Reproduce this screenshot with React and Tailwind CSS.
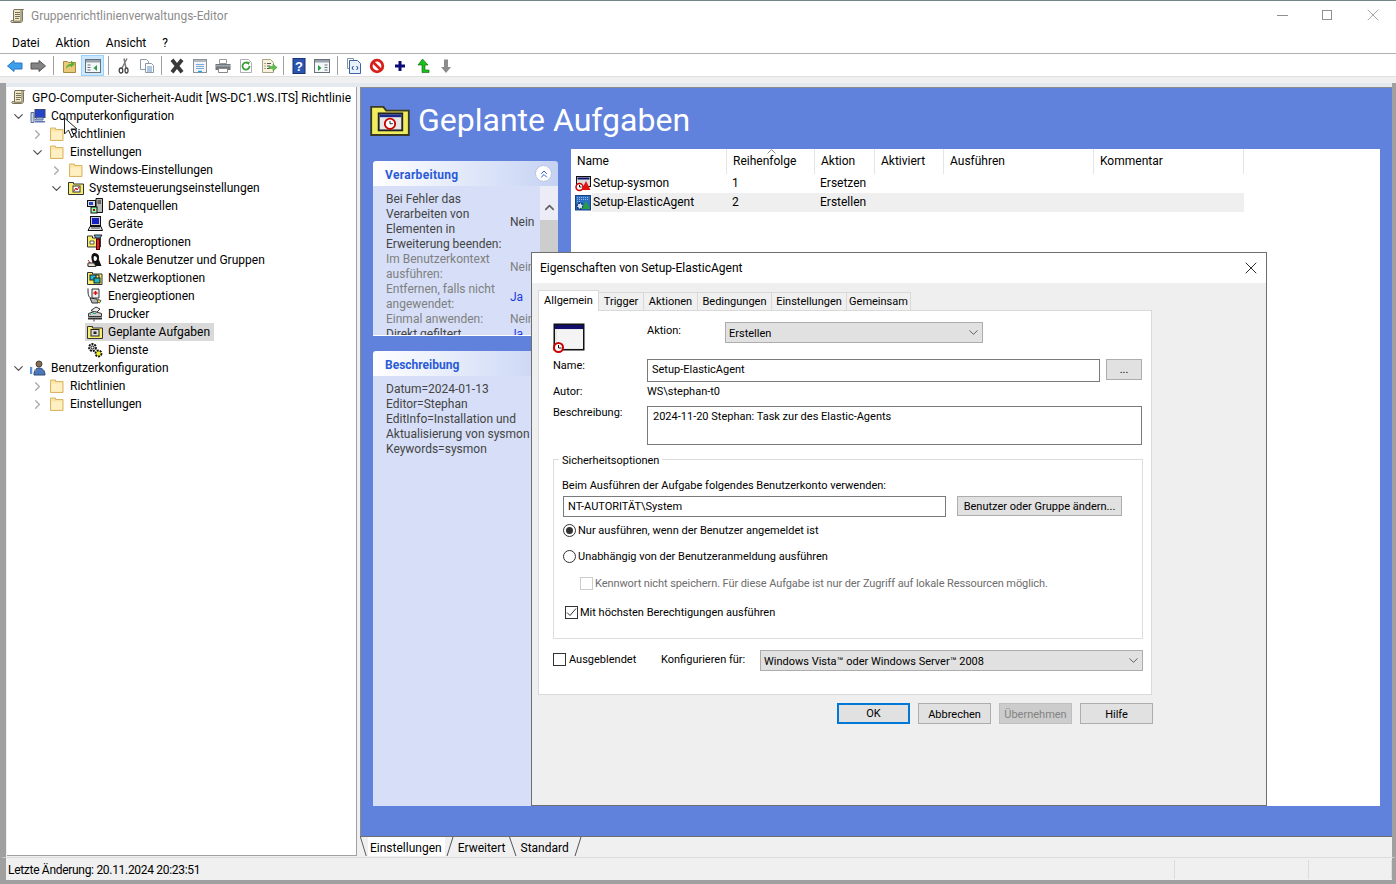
import React from "react";
import { ChevronDown, ChevronRight, ChevronsUp, ChevronUp, X } from "lucide-react";

// --- small drawn icons (16x16) ---
const Svg = ({ children, size = 16, box = 16 }) => (
  <svg width={size} height={size} viewBox={`0 0 ${box} ${box}`} className="shrink-0 block">
    {children}
  </svg>
);

const Scroll = () => (
  <Svg>
    <path d="M4 1.500h9.500c-1 .5-1.200 1.500-1 2.500v8.500c0 1.200-1 2-2 2H2c-1 0-1.500-.8-1-1.800h8V3.500c0-1 .5-2 1.500-2" fill="#f1e7c5" stroke="#77705a" />
    <path d="M4 1.500h7v11.700H3.500V3z" fill="#f1e7c5" stroke="#77705a" />
    <path d="M5 4.500h5M5 6.500h5M5 8.500h5M5 10.500h4" stroke="#77705a" />
  </Svg>
);
const Folder = () => (
  <Svg>
    <path d="M1.500 3.500V2h5v1.500h7.500v11H1.500z" fill="#fbe3a4" stroke="#d8b563" />
    <path d="M2.500 5.500h10.500v8H2.500z" fill="#fff0c4" />
  </Svg>
);
const ControlFolder = () => (
  <Svg>
    <path d="M.5 4V2.500h5V4h10v10.500H.5z" fill="#f6ee6c" stroke="#333" />
    <rect x="5" y="6" width="7" height="6" fill="#fff" stroke="#333" />
    <path d="M6 11l2-3 1 2 2-3" stroke="#c00" fill="none" />
  </Svg>
);
const Computer = () => (
  <Svg>
    <path d="M1 4.500h3v10H1z" fill="#c8d3e8" stroke="#5a6e95" />
    <rect x="5" y="1.500" width="10" height="8" fill="#2743c7" stroke="#3a4a70" />
    <path d="M7 9.500h6v2.500H5z" fill="#9fb1d8" stroke="#5a6e95" />
    <path d="M5 13h10v1.500H5z" fill="#5d76b5" />
  </Svg>
);
const DataSources = () => (
  <Svg>
    <rect x=".5" y="2.500" width="8" height="6" fill="#ddd" stroke="#111" />
    <path d="M9 .5h6.500v14H9z" fill="#bbb" stroke="#111" />
    <path d="M10.500 3h3.500M10.500 5h3.500" stroke="#111" />
    <rect x="4" y="9" width="6" height="6" fill="#8fa" stroke="#111" />
    <rect x="2" y="4" width="4" height="3" fill="#2743c7" />
    <rect x="6" y="11" width="2" height="2" fill="#c00" />
  </Svg>
);
const Device = () => (
  <Svg>
    <rect x="3.500" y=".5" width="10" height="9" fill="#ccc" stroke="#111" />
    <rect x="5" y="2" width="7" height="6" fill="#1520c0" />
    <path d="M1 14.500l2-4h11l1.500 4z" fill="#ddd" stroke="#111" />
    <path d="M4 12h9" stroke="#555" />
  </Svg>
);
const FolderOptions = () => (
  <Svg>
    <path d="M.5 4V2h5v2h8v9H.5z" fill="#f6ee6c" stroke="#333" />
    <path d="M7 1h8l-2 3h-4z" fill="#6aa6d8" stroke="#222" />
    <rect x="9.500" y="5" width="3" height="10.500" fill="#d22" stroke="#500" />
    <path d="M3 7h4v3H3z" fill="#fff" stroke="#555" />
  </Svg>
);
const Users = () => (
  <Svg>
    <path d="M7 1c3 0 5 1.500 5 4 0 2-.5 3 .5 4l2 5H6.500L5 9C4 6 4 2 7 1z" fill="#111" />
    <path d="M7 4c2 0 3 1 3 2.500S9 9 8 9 6 7 7 4z" fill="#fff" />
    <path d="M1 8l5 6.500M.5 13.500L3 10" stroke="#c22" />
    <path d="M1 11h6l2 3.500H1z" fill="#e5e0d0" stroke="#333" />
  </Svg>
);
const Network = () => (
  <Svg>
    <path d="M.5 4V2.500h5V4h9.500v10.500H.5z" fill="#f6ee6c" stroke="#333" />
    <rect x="3" y="5" width="6" height="5" fill="#27b5d8" stroke="#222" />
    <rect x="7" y="8" width="6" height="5" fill="#2bb" stroke="#222" />
    <path d="M9 5h3v3" stroke="#222" fill="none" />
  </Svg>
);
const Power = () => (
  <Svg>
    <path d="M1 .5c0 5 0 8 3 10" stroke="#222" fill="none" />
    <path d="M5 1h7v9H5z" fill="#eee" stroke="#333" />
    <path d="M8.500 3v4M6.500 5h4" stroke="#d11" strokeWidth="1.500" />
    <path d="M3 10l7 1 1 4H5z" fill="#b6b6b6" stroke="#333" />
    <path d="M11 11.500l3 1-1.500 2.500-2-1z" fill="#ee3" stroke="#555" />
  </Svg>
);
const Printer = () => (
  <Svg>
    <path d="M4 4.500l5-3.500 4 2-4 4z" fill="#eee" stroke="#333" />
    <path d="M1.500 7.500l6-2 7 2v3h-13z" fill="#ccc" stroke="#333" />
    <path d="M1 12.500h14" stroke="#333" strokeWidth="2" />
    <path d="M3 8.500h1M6 7.500h3" stroke="#2a8" />
    <path d="M7 13.500v2" stroke="#333" />
  </Svg>
);
const SchedFolder = () => (
  <Svg>
    <path d="M.5 4V2.500h5V4h10v10.500H.5z" fill="#f6ee6c" stroke="#333" />
    <rect x="4" y="5.500" width="8" height="6.500" fill="#ddd" stroke="#222" />
    <rect x="6.500" y="7.500" width="3" height="2.500" fill="#222" />
  </Svg>
);
const Gears = () => (
  <Svg>
    <circle cx="5.500" cy="5.500" r="3.500" fill="#ddd" stroke="#111" strokeWidth="1.800" strokeDasharray="2 1" />
    <circle cx="5.500" cy="5.500" r="1.500" fill="#fff" stroke="#111" />
    <circle cx="11.500" cy="11.500" r="3" fill="#ee3" stroke="#111" strokeWidth="1.800" strokeDasharray="2 1" />
  </Svg>
);
const UserConfig = () => (
  <Svg>
    <circle cx="9" cy="4" r="3" fill="#8a6a4f" stroke="#444" />
    <path d="M4 15c0-5 2-7 5-7s6 2 6 7z" fill="#4c78b8" stroke="#2c4a78" />
    <path d="M1 7v7" stroke="#5d90d8" strokeWidth="2.500" />
    <path d="M4 10h2" stroke="#bbb" />
  </Svg>
);

const ClockWindow = () => (
  <Svg>
    <rect x="1.500" y=".5" width="14" height="10" fill="#ddd" stroke="#111" />
    <rect x="2.500" y="1.500" width="12" height="2" fill="#10106a" />
    <circle cx="4.500" cy="11" r="3.500" fill="#fff" stroke="#c00" strokeWidth="1.500" />
    <path d="M4.500 9v2h2" stroke="#111" fill="none" />
    <path d="M11 5l4.500 9h-9z" fill="#e01010" />
  </Svg>
);
const GearWindow = () => (
  <Svg>
    <rect x=".5" y=".5" width="15" height="14.500" fill="#2a6fc0" stroke="#1b3f86" />
    <path d="M2 2.500h12M2 4.500h12M2 6.500h3" stroke="#93b7e8" strokeDasharray="1 1" />
    <circle cx="5" cy="11" r="3" fill="#cfe0f7" stroke="#0a2a60" strokeWidth="1.500" strokeDasharray="2 1" />
    <path d="M11 6l4 8H7z" fill="#22a040" />
  </Svg>
);

// toolbar icons
const tb = {
  back: <path d="M.5 8L7 2.500V5h8v6H7v2.500z" fill="#3d9eea" stroke="#2a78c5" />,
  forward: <path d="M15.500 8L9 2.500V5H1v6h8v2.500z" fill="#848484" stroke="#555" />,
  upFolder: (
    <>
      <path d="M1.500 3.500h4l1 1h7v10h-12z" fill="#e9c978" stroke="#a98a3c" />
      <path d="M4 11c0-3 2-5 5-5V2.500L13 6 9 9.500V8C7 8 5 9 4 11z" fill="#5cae3c" />
    </>
  ),
  showTree: (
    <>
      <rect x=".5" y="1.500" width="15" height="13" fill="#f4f7fa" stroke="#68707a" />
      <path d="M1 2h14v2.500H1z" fill="#9aa3ad" />
      <path d="M2.500 6.500h3v1h-3zM2.500 9h3v1h-3zM2.500 11.500h3v1h-3z" fill="#68707a" />
      <path d="M12 7v6l-3.500-3z" fill="#2d9a4a" />
    </>
  ),
  cut: (
    <>
      <path d="M11 .5L6 10M8 .5L10 10" stroke="#7d7d7d" strokeWidth="1.500" fill="none" />
      <ellipse cx="5" cy="12.500" rx="1.800" ry="2.500" fill="none" stroke="#444" strokeWidth="1.300" />
      <ellipse cx="10.500" cy="12.500" rx="1.500" ry="2.500" fill="none" stroke="#444" strokeWidth="1.300" />
    </>
  ),
  copy: (
    <>
      <path d="M1.500 1.500h6l2 2v8h-8z" fill="#fff" stroke="#8f99a5" />
      <path d="M6.500 5.500h6l2 2v7h-8z" fill="#fff" stroke="#8f99a5" />
      <path d="M8 9h5M8 11h5M8 13h5" stroke="#5d8ec8" />
    </>
  ),
  del: <path d="M1.500 3l3-2.500L8 5l3.500-4.500 3 2.500L10.500 8l4 5-3 2.500L8 11l-3.500 4.500-3-2.500 4-5z" fill="#3a3a3a" />,
  props: (
    <>
      <rect x="1.500" y="1.500" width="13" height="13" fill="#f2f4f6" stroke="#8b929a" />
      <path d="M2 2h12v2H2z" fill="#b4bac1" />
      <path d="M4 6.500h8M4 8.500h8M4 10.500h8" stroke="#7aa6d8" />
      <path d="M6 13.500h4" stroke="#27a3dc" strokeWidth="1.500" />
    </>
  ),
  print: (
    <>
      <path d="M4.500 1.500h7v4h-7z" fill="#fff" stroke="#999" />
      <path d="M.5 6h15v6H.5z" fill="#70767c" />
      <path d="M1 7h14v1.500H1z" fill="#a0a6ac" />
      <path d="M3.500 10.500h9v4h-9z" fill="#fff" stroke="#888" />
    </>
  ),
  refresh: (
    <>
      <path d="M2.500 1.500h8l3 3v10h-11z" fill="#fff" stroke="#aab0b5" />
      <path d="M11.500 8a3.500 3.500 0 1 1-1.500-2.800" fill="none" stroke="#3a9e3a" strokeWidth="1.800" />
      <path d="M8 3.500l4 .5-1.500 3z" fill="#3a9e3a" />
    </>
  ),
  exportList: (
    <>
      <path d="M1.500 1.500h8l3 3v10h-11z" fill="#f8f2dc" stroke="#a9a386" />
      <path d="M3.500 5.500h1M6 5.500h4M3.500 8h1M6 8h3M3.500 10.500h1M6 10.500h3" stroke="#555" />
      <path d="M8 8.500h4V6l4 3.500-4 3.500v-2.500H8z" fill="#5cc04a" stroke="#3a8a30" strokeWidth=".5" />
    </>
  ),
  help: (
    <>
      <rect x="2" y=".5" width="12" height="15" fill="#2a54b0" stroke="#1b3170" />
      <text x="8" y="13" textAnchor="middle" fill="#fff" fontSize="13" fontWeight="700" fontFamily="Liberation Sans">?</text>
    </>
  ),
  view: (
    <>
      <rect x=".5" y="1.500" width="15" height="13" fill="#f4f7fa" stroke="#68707a" />
      <path d="M1 2h14v2.500H1z" fill="#9aa3ad" />
      <path d="M10.500 6.500h3v1h-3zM10.500 9h3v1h-3zM10.500 11.500h3v1h-3z" fill="#68707a" />
      <path d="M4 7v6l3.500-3z" fill="#2d9a4a" />
    </>
  ),
  xmlDoc: (
    <>
      <path d="M1.500 .5h6v10h-6z" fill="#fff" stroke="#8a94a0" />
      <path d="M3.500 2.500h8l3 3v10h-11z" fill="#e8f1fb" stroke="#3a64a8" />
      <path d="M7.500 8L6 10l1.500 2M10.500 8L12 10l-1.500 2" stroke="#1b3f8a" fill="none" />
    </>
  ),
  stop: (
    <>
      <circle cx="8" cy="8" r="5.800" fill="#fff" stroke="#d8201a" strokeWidth="2.800" />
      <path d="M4 4l8 8" stroke="#d8201a" strokeWidth="2.500" />
    </>
  ),
  plus: <path d="M6.500 3h3v3.500H13v3H9.500V13h-3V9.500H3v-3h3.500z" fill="#0b0b78" />,
  up: <path d="M7.500 1L13 7H10v5h4v2.500H7V7H3z" fill="#18c018" stroke="#0b5a0b" strokeWidth=".6" />,
  down: <path d="M6 1.500h4V9h3l-5 6-5-6h3z" fill="#8c8c8c" />,
};

const ToolIcon = ({ name, active }) => (
  <div
    className={
      active
        ? "w-[23px] h-[21px] flex items-center justify-center bg-[#cce8ff] border border-[#99d1ff]"
        : "w-[23px] h-[21px] flex items-center justify-center"
    }
  >
    <Svg>{tb[name]}</Svg>
  </div>
);

const toolbarGroups = [
  { items: ["back", "forward"] },
  { sep: "w-[9px]", items: ["upFolder", "showTree"] },
  { sep: "w-[8px]", items: ["cut", "copy"] },
  { sep: "w-[7px]", items: ["del", "props", "print", "refresh", "exportList"] },
  { sep: "w-[7px]", items: ["help", "view"] },
  { sep: "w-[9px]", items: ["xmlDoc", "stop", "plus", "up", "down"] },
];

const indent = {
  0: "pl-0",
  1: "pl-[19px]",
  2: "pl-[38px]",
  3: "pl-[57px]",
};

const treeRows = [
  { depth: 0, open: true, icon: <Computer />, label: "Computerkonfiguration" },
  { depth: 1, closed: true, icon: <Folder />, label: "Richtlinien" },
  { depth: 1, open: true, icon: <Folder />, label: "Einstellungen" },
  { depth: 2, closed: true, icon: <Folder />, label: "Windows-Einstellungen" },
  { depth: 2, open: true, icon: <ControlFolder />, label: "Systemsteuerungseinstellungen" },
  { depth: 3, icon: <DataSources />, label: "Datenquellen" },
  { depth: 3, icon: <Device />, label: "Geräte" },
  { depth: 3, icon: <FolderOptions />, label: "Ordneroptionen" },
  { depth: 3, icon: <Users />, label: "Lokale Benutzer und Gruppen" },
  { depth: 3, icon: <Network />, label: "Netzwerkoptionen" },
  { depth: 3, icon: <Power />, label: "Energieoptionen" },
  { depth: 3, icon: <Printer />, label: "Drucker" },
  { depth: 3, icon: <SchedFolder />, label: "Geplante Aufgaben", selected: true },
  { depth: 3, icon: <Gears />, label: "Dienste" },
  { depth: 0, open: true, icon: <UserConfig />, label: "Benutzerkonfiguration" },
  { depth: 1, closed: true, icon: <Folder />, label: "Richtlinien" },
  { depth: 1, closed: true, icon: <Folder />, label: "Einstellungen" },
];

const TreeRow = ({ row }) => (
  <div className={`flex items-center h-[18px] ${indent[row.depth]}`}>
    <div className="w-[19px] flex justify-center">
      {row.open && <ChevronDown size={15} strokeWidth={2} className="text-[#555]" />}
      {row.closed && <ChevronRight size={15} strokeWidth={2} className="text-[#aaa]" />}
    </div>
    <div className={row.selected ? "flex items-center h-[18px] pr-[4px] bg-[#d9d9d9]" : "flex items-center h-[18px]"}>
      <div className="w-[19px] flex justify-center">{row.icon}</div>
      <span className="ml-[4px] whitespace-nowrap">{row.label}</span>
    </div>
  </div>
);

const columns = [
  { name: "Name", w: "w-[156px]" },
  { name: "Reihenfolge", w: "w-[88px]" },
  { name: "Aktion", w: "w-[60px]" },
  { name: "Aktiviert", w: "w-[69px]" },
  { name: "Ausführen", w: "w-[150px]" },
  { name: "Kommentar", w: "w-[150px]" },
];

const TaskRow = ({ icon, name, order, action, selected }) => (
  <div className="flex items-center h-[19px] pl-[4px] w-[673px]">
    <div className="w-[16px] mr-px">{icon}</div>
    <div className={selected ? "flex items-center flex-1 h-[19px] bg-[#efefef]" : "flex items-center flex-1 h-[19px]"}>
      <span className="w-[140px] pl-px">{name}</span>
      <span className="w-[88px]">{order}</span>
      <span>{action}</span>
    </div>
  </div>
);

const SlantTab = ({ flip, w = 9 }) => (
  <svg width={w} height="19" viewBox="0 0 9 19" preserveAspectRatio="none" className="shrink-0">
    <path d={flip ? "M8 0L2 19" : "M.5 0L7 19"} stroke="#555" fill="none" />
  </svg>
);

const Setting = ({ label, value, muted, blue }) => (
  <div className="flex items-center">
    <div className={muted ? "w-[124px] text-[#808080]" : "w-[124px]"}>{label}</div>
    <div className={blue ? "text-[#1a3be0]" : muted ? "text-[#808080]" : ""}>{value}</div>
  </div>
);

const DlgTab = ({ children, w }) => (
  <div className={`${w} h-[18px] flex items-center justify-center bg-[#f0f0f0] border border-b-0 border-l-0 border-[#d9d9d9]`}>
    {children}
  </div>
);

const Btn = ({ children, primary, disabled }) => (
  <div
    className={
      primary
        ? "w-[73px] h-[21px] flex items-center justify-center pt-px bg-[#e1e1e1] border-2 border-[#0078d7]"
        : disabled
        ? "w-[73px] h-[21px] flex items-center justify-center pt-[2px] bg-[#cccccc] border border-[#bfbfbf] text-[#838383]"
        : "w-[73px] h-[21px] flex items-center justify-center pt-[2px] bg-[#e1e1e1] border border-[#adadad]"
    }
  >
    {children}
  </div>
);

const Combo = ({ children, w }) => (
  <div className={`${w} h-[21px] flex items-center justify-between pl-[3px] pr-[1px] bg-[#e1e1e1] border border-[#adadad]`}>
    <span className="pt-[2px]">{children}</span>
    <ChevronDown size={15} strokeWidth={1.2} className="text-[#333]" />
  </div>
);

const App = () => {
  return (
    <div className="relative w-[1396px] h-[884px] flex flex-col overflow-hidden bg-white text-[12px] leading-[15px] text-black font-['Roboto',sans-serif]">
      {/* title bar */}
      <div className="h-[31px] shrink-0 flex items-center border-t border-[#75858c] pl-[10px]">
        <Scroll />
        <span className="ml-[5px] text-[#8c8c8c]">Gruppenrichtlinienverwaltungs-Editor</span>
        <div className="ml-auto flex items-center text-[#8c8c8c] -mt-[2px]">
          <div className="w-[11px] h-px bg-[#909090] mr-[34px]" />
          <div className="w-[10px] h-[10px] border border-[#909090] mr-[31px]" />
          <X size={20} strokeWidth={0.9} className="mr-[13px]" />
        </div>
      </div>

      {/* menu */}
      <div className="h-[23px] shrink-0 flex items-center gap-[16px] pl-[12px] pt-[2px] border-b border-[#b0b0b0]">
        <span>Datei</span>
        <span>Aktion</span>
        <span>Ansicht</span>
        <span>?</span>
      </div>

      {/* toolbar */}
      <div className="h-[23px] shrink-0 flex items-center pl-[3px] pt-[1px] border-b border-[#dfdfdf]">
        {toolbarGroups.map((group, i) => (
          <React.Fragment key={i}>
            {group.sep && (
              <div className={`${group.sep} flex justify-center`}>
                <div className="w-px h-[19px] bg-[#a0a0a0]" />
              </div>
            )}
            {group.items.map((name) => (
              <ToolIcon key={name} name={name} active={name === "showTree"} />
            ))}
          </React.Fragment>
        ))}
      </div>

      <div className="h-[6px] shrink-0 bg-[#f0f0f0]" />
      <div className="h-[4px] shrink-0 bg-[#e4e9ef] border-l-[6px] border-r-[4px] border-[#a0a0a0]" />

      {/* main area */}
      <div className="flex-1 min-h-0 flex bg-[#f0f0f0] border-l-[6px] border-r-[4px] border-[#a0a0a0]">
        {/* tree */}
        <div className="w-[350px] ml-[1px] shrink-0 bg-white pl-[2px] pt-[1px] border-r border-[#a0a0a0] mb-px border-b">
          <div className="flex items-center h-[18px]">
            <div className="w-[19px] flex justify-center">
              <Scroll />
            </div>
            <span className="ml-[4px] pt-[3px] whitespace-nowrap tracking-[0.09px]">GPO-Computer-Sicherheit-Audit [WS-DC1.WS.ITS] Richtlinie</span>
          </div>
          <div className="pt-px">
            {treeRows.map((row, i) => (
              <TreeRow key={i} row={row} />
            ))}
          </div>
        </div>

        {/* right pane */}
        <div className="ml-[3px] flex-1 min-w-0 flex flex-col">
          <div className="h-[749px] shrink-0 bg-[#6082dd] border-l border-t border-[#8a8a8a]">
            <div className="flex items-center h-[61px] pl-[9px] pt-[3px]">
              <svg width="40" height="32" viewBox="0 0 42 34" className="shrink-0">
                <path d="M1 7V3h13l3 4h24v26H1z" fill="#f0ec60" stroke="#3a3a20" strokeWidth="2" />
                <rect x="9" y="10" width="25" height="18" fill="#e6e6e6" stroke="#222" strokeWidth="2" />
                <rect x="10" y="11" width="23" height="3" fill="#1b2a8a" />
                <circle cx="21" cy="21" r="5.500" fill="#fff" stroke="#c00" strokeWidth="2" />
                <path d="M21 18v3h3" stroke="#111" fill="none" />
              </svg>
              <span className="ml-[8px] text-[32px] leading-[40px] text-white">Geplante Aufgaben</span>
            </div>

            <div className="flex pl-[12px] h-[657px]">
              {/* side cards */}
              <div className="w-[185px] shrink-0 pt-[12px] flex flex-col text-[#444]">
                <div className="h-[25px] shrink-0 flex items-center justify-between pl-[12px] pr-[6px] rounded-t-[3px] bg-linear-to-r from-white to-[#c5d2f3]">
                  <span className="pt-[4px] font-bold tracking-[0.3px] text-[#2a5bd7]">Verarbeitung</span>
                  <div className="w-[17px] h-[17px] rounded-full bg-white border border-[#b8c4e4] flex items-center justify-center">
                    <ChevronsUp size={12} strokeWidth={2} className="text-[#2a5bd7]" />
                  </div>
                </div>
                <div className="h-[150px] shrink-0 flex bg-[#d6dff7] border-b border-white overflow-hidden">
                  <div className="flex-1 min-w-0 pl-[13px] pt-[6px] flex flex-col">
                    <Setting label={<>Bei Fehler das<br />Verarbeiten von<br />Elementen in<br />Erweiterung beenden:</>} value="Nein" />
                    <Setting label={<>Im Benutzerkontext<br />ausführen:</>} value="Nein" muted />
                    <div className="flex items-center">
                      <div className="w-[124px] text-[#808080]">Entfernen, falls nicht<br />angewendet:</div>
                      <div className="text-[#1a3be0]">Ja</div>
                    </div>
                    <Setting label="Einmal anwenden:" value="Nein" muted />
                    <Setting label="Direkt gefiltert" value="Ja" blue />
                  </div>
                  <div className="w-[18px] shrink-0 bg-[#ececf6] flex flex-col items-center pt-[14px]">
                    <ChevronUp size={15} strokeWidth={2.5} className="text-[#606060]" />
                    <div className="w-full h-[100px] mt-[5px] bg-[#cdcdcd]" />
                  </div>
                </div>
                <div className="h-[25px] shrink-0 mt-[15px] flex items-center pl-[12px] rounded-t-[3px] bg-linear-to-r from-white to-[#c5d2f3]">
                  <span className="pt-[4px] font-bold text-[#2a5bd7]">Beschreibung</span>
                </div>
                <div className="flex-1 bg-[#d6dff7] pl-[13px] pt-[6px] whitespace-nowrap">
                  Datum=2024-01-13
                  <br />
                  Editor=Stephan
                  <br />
                  EditInfo=Installation und
                  <br />
                  Aktualisierung von sysmon
                  <br />
                  Keywords=sysmon
                </div>
              </div>

              {/* task list */}
              <div className="ml-[13px] w-[809px] h-[657px] bg-white">
                <div className="flex h-[25px]">
                  {columns.map((c) => (
                    <div key={c.name} className={`${c.w} relative flex items-center pl-[6px] border-r border-[#e5e5e5]`}>
                      {c.name}
                      {c.name === "Reihenfolge" && (
                        <svg width="9" height="5" viewBox="0 0 9 5" className="absolute top-0 left-[40px]">
                          <path d="M.5 4.500L4.500 .5l4 4" stroke="#888" fill="none" />
                        </svg>
                      )}
                    </div>
                  ))}
                </div>
                <TaskRow icon={<ClockWindow />} name="Setup-sysmon" order="1" action="Ersetzen" />
                <TaskRow icon={<GearWindow />} name="Setup-ElasticAgent" order="2" action="Erstellen" selected />
              </div>
            </div>
          </div>

          {/* bottom tabs */}
          <div className="h-[20px] shrink-0 flex items-stretch border-t border-[#6e6e6e]">
            <SlantTab w={8} />
            <span className="flex items-center bg-white pl-[2px] pr-[3px] pt-[3px]">Einstellungen</span>
            <SlantTab flip />
            <span className="flex items-center pl-[4px] pr-[3px] pt-[3px]">Erweitert</span>
            <SlantTab />
            <span className="flex items-center pl-[3px] pr-[4px] pt-[3px]">Standard</span>
            <SlantTab flip />
          </div>
        </div>
      </div>

      {/* status bar */}
      <div className="h-[23px] shrink-0 flex items-center bg-[#f0f0f0] border-t border-[#dcdcdc] border-l-[6px] border-r-[4px] border-l-[#a0a0a0] border-r-[#a0a0a0] pl-[2px]">
        <span className="flex-1 pt-[2px] tracking-[-0.3px]">Letzte Änderung: 20.11.2024 20:23:51</span>
        <div className="w-[134px] h-[19px] border-l border-[#dcdcdc]" />
        <div className="w-[84px] h-[19px] border-x border-[#dcdcdc]" />
      </div>
      <div className="h-[4px] shrink-0 bg-[#a0a0a0]" />

      {/* mouse pointer over the tree */}
      <svg width="16" height="22" viewBox="0 0 16 22" className="absolute left-[63px] top-[117px]">
        <path d="M1.500 1v16l4-4 3 7 2.500-1-3-7h6z" fill="#fff" stroke="#222" />
      </svg>

      {/* properties dialog */}
      <div className="absolute left-[531px] top-[252px] w-[736px] h-[554px] flex flex-col bg-[#efefef] border border-[#6e6e6e] text-[11px] leading-[14px]">
        <div className="h-[30px] shrink-0 flex items-center justify-between bg-white pl-[8px] pr-[5px] text-[12px]">
          <span>Eigenschaften von Setup-ElasticAgent</span>
          <X size={20} strokeWidth={1} />
        </div>

        <div className="flex items-end pl-[6px] h-[27px] shrink-0">
          <div className="w-[61px] h-[21px] flex items-center justify-center bg-white border border-b-0 border-[#d9d9d9] relative top-px z-10">
            Allgemein
          </div>
          <DlgTab w="w-[45px]">Trigger</DlgTab>
          <DlgTab w="w-[54px]">Aktionen</DlgTab>
          <DlgTab w="w-[74px]">Bedingungen</DlgTab>
          <DlgTab w="w-[75px]">Einstellungen</DlgTab>
          <DlgTab w="w-[64px]">Gemeinsam</DlgTab>
        </div>

        {/* page */}
        <div className="ml-[6px] w-[614px] h-[385px] shrink-0 bg-white border border-[#d9d9d9] pl-[14px] pr-[8px] pt-[11px]">
          <div className="flex h-[37px]">
            <div className="w-[94px] pt-px">
              <svg width="32" height="31" viewBox="0 0 32 31">
                <rect x=".5" y=".5" width="31" height="27" fill="#111" />
                <rect x="2" y="2" width="28" height="24" fill="#e8e8e8" />
                <rect x="2" y="2" width="28" height="4" fill="#10106a" />
                <rect x="4" y="7" width="26" height="18" fill="#f4f4f4" />
                <circle cx="5.500" cy="24.500" r="4.500" fill="#fff" stroke="#c00" strokeWidth="2" />
                <path d="M5.500 22v3h3" stroke="#111" fill="none" />
              </svg>
            </div>
            <div className="w-[78px] pt-[2px]">Aktion:</div>
            <Combo w="w-[258px]">Erstellen</Combo>
          </div>

          <div className="flex h-[25px]">
            <div className="w-[94px]">Name:</div>
            <div className="w-[453px] h-[23px] flex items-center pl-[4px] pb-[2px] border border-[#7a7a7a]">Setup-ElasticAgent</div>
            <div className="ml-[6px] w-[36px] h-[21px] flex items-center justify-center bg-[#e1e1e1] border border-[#adadad]">...</div>
          </div>

          <div className="flex h-[15px] items-center">
            <div className="w-[94px]">Autor:</div>
            <span>WS\stephan-t0</span>
          </div>

          <div className="flex mt-[7px] h-[46px]">
            <div className="w-[94px]">Beschreibung:</div>
            <div className="w-[495px] h-[39px] pl-[5px] pt-[3px] border border-[#7a7a7a]">2024-11-20 Stephan: Task zur des Elastic-Agents</div>
          </div>

          <fieldset className="w-[590px] h-[187px] border border-[#dcdcdc] pl-[8px]">
            <legend className="-ml-[3px] px-[3px] h-[14px] pt-[2px]">Sicherheitsoptionen</legend>
            <div className="mt-[12px] pt-px leading-[14px]">Beim Ausführen der Aufgabe folgendes Benutzerkonto verwenden:</div>
            <div className="flex mt-[3px] pl-px">
              <div className="w-[383px] h-[21px] flex items-center pl-[4px] pt-px border border-[#7a7a7a]">NT-AUTORITÄT\System</div>
              <div className="ml-[11px] w-[165px] h-[20px] flex items-center justify-center pt-px bg-[#e1e1e1] border border-[#adadad] whitespace-nowrap">Benutzer oder Gruppe ändern...</div>
            </div>
            <div className="flex items-center mt-[6px] h-[14px] pl-px">
              <div className="w-[13px] h-[13px] rounded-full border border-[#333] flex items-center justify-center">
                <div className="w-[7px] h-[7px] rounded-full bg-[#333]" />
              </div>
              <span className="ml-[2px] pt-[2px]">Nur ausführen, wenn der Benutzer angemeldet ist</span>
            </div>
            <div className="flex items-center mt-[12px] h-[14px] pl-px">
              <div className="w-[13px] h-[13px] rounded-full border border-[#333]" />
              <span className="ml-[2px] pt-[2px]">Unabhängig von der Benutzeranmeldung ausführen</span>
            </div>
            <div className="flex items-center mt-[13px] h-[14px] pl-[18px] text-[#6d6d6d]">
              <div className="w-[13px] h-[13px] border border-[#cccccc]" />
              <span className="ml-[2px] pt-[2px] tracking-[-0.09px]">Kennwort nicht speichern. Für diese Aufgabe ist nur der Zugriff auf lokale Ressourcen möglich.</span>
            </div>
            <div className="flex items-center mt-[15px] h-[14px] pl-[3px]">
              <div className="w-[13px] h-[13px] border border-[#333] flex items-center justify-center">
                <svg width="11" height="11" viewBox="0 0 11 11">
                  <path d="M1 5.500l3 3 6-7" stroke="#333" fill="none" />
                </svg>
              </div>
              <span className="ml-[2px] pt-[2px]">Mit höchsten Berechtigungen ausführen</span>
            </div>
          </fieldset>

          <div className="flex items-start mt-[11px]">
            <div className="flex items-center w-[108px] h-[18px]">
              <div className="w-[13px] h-[13px] border border-[#333]" />
              <span className="ml-[3px] pt-[2px]">Ausgeblendet</span>
            </div>
            <div className="w-[99px] h-[18px] flex items-center pt-[2px]">Konfigurieren für:</div>
            <Combo w="w-[383px]">Windows Vista™ oder Windows Server™ 2008</Combo>
          </div>
        </div>

        {/* dialog buttons */}
        <div className="flex justify-end gap-[8px] w-[621px] mt-[8px]">
          <Btn primary>OK</Btn>
          <Btn>Abbrechen</Btn>
          <Btn disabled>Übernehmen</Btn>
          <Btn>Hilfe</Btn>
        </div>
      </div>
    </div>
  );
};

export default App;
